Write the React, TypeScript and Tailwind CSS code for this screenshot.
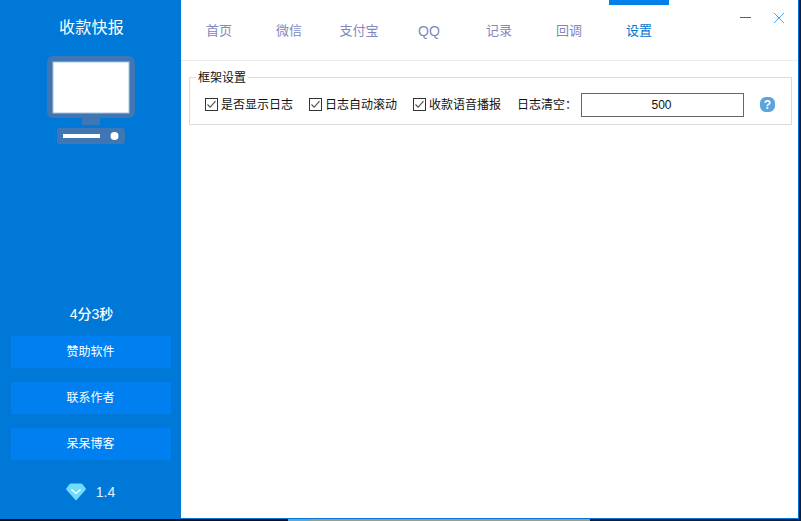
const FONT = "font-['Liberation_Sans','Noto_Sans_CJK_SC',sans-serif]";

const tabs = ["首页", "微信", "支付宝", "QQ", "记录", "回调", "设置"];

function Monitor() {
  return (
    <svg width="88" height="88" viewBox="0 0 88 88" className="block">
      <rect x="0" y="0" width="88" height="62" rx="6" fill="#3f76b4" />
      <rect x="6" y="6" width="76" height="51" fill="#fff" stroke="#a9c1de" strokeWidth="1" />
      <rect x="35" y="62" width="18" height="7" fill="#3f76b4" />
      <rect x="10" y="72" width="68" height="16" rx="3" fill="#3f76b4" />
      <rect x="16" y="78" width="37" height="4" fill="#fff" />
      <circle cx="67.5" cy="80" r="4" fill="#fff" />
    </svg>
  );
}

function Diamond() {
  return (
    <svg width="20" height="18" viewBox="0 0 20 18" className="block">
      <path d="M5 0.5H15Q16 0.5 16.6 1.3L19.6 5.3Q20.2 6.2 19.4 7L10.6 17Q10 17.6 9.4 17L0.6 7Q-0.2 6.2 0.4 5.3L3.4 1.3Q4 0.5 5 0.5Z" fill="#6fdcfb" />
      <path d="M5.5 6.5L10 10.5L14.5 6.5" fill="none" stroke="#fff" strokeWidth="1.2" />
    </svg>
  );
}

function Check({ label }: { label: string }) {
  return (
    <div className="flex items-center gap-[3px]">
      <svg width="13" height="13" viewBox="0 0 13 13" className="block">
        <rect x="0.5" y="0.5" width="12" height="12" fill="#fff" stroke="#333" />
        <path d="M2.5 6.5L5.2 9.2L10.5 3.2" fill="none" stroke="#555" strokeWidth="1.2" />
      </svg>
      <span className="text-xs text-[#111]">{label}</span>
    </div>
  );
}

function SideButton({ label }: { label: string }) {
  return (
    <div className="h-8 w-40 flex items-center justify-center bg-[#0080f0] text-xs text-white">{label}</div>
  );
}

export default function App() {
  return (
    <div className={`w-[801px] h-[521px] overflow-hidden flex flex-col bg-[#0a1a3a] ${FONT}`}>
      <div className="h-[519px] flex">
        <div className="w-[799px] flex border-r border-b border-[#0078d7] bg-white">
          <aside className="w-[181px] shrink-0 bg-[#0078d7] flex flex-col items-center">
            <div className="mt-[18px] pl-[2px] text-base leading-[20px] tracking-[0.3px] text-white">收款快报</div>
            <div className="mt-[18px]">
              <Monitor />
            </div>
            <div className="mt-[160px] pl-[2px] text-sm leading-[20px] font-medium text-white">4分3秒</div>
            <div className="mt-3 flex flex-col gap-[14px]">
              <SideButton label="赞助软件" />
              <SideButton label="联系作者" />
              <SideButton label="呆呆博客" />
            </div>
            <div className="mt-[23px] flex items-center gap-[10px]">
              <Diamond />
              <span className="text-sm leading-[14px] text-[#e8f2ff]">1.4</span>
            </div>
          </aside>
          <main className="flex-1 flex flex-col min-w-0">
            <nav className="h-[61px] shrink-0 pl-[3px] flex border-b border-[#ececec]">
              {tabs.map((t) => (
                <div key={t} className="w-[70px] flex flex-col items-center">
                  <div className={`w-[60px] h-[5px] ${t === "设置" ? "bg-[#0080e8]" : ""}`} />
                  <div
                    className={`mt-4 leading-5 ${t === "QQ" ? "text-sm" : "text-[13px]"} ${t === "设置" ? "text-[#0072d0]" : "text-[#8088bf]"}`}
                  >
                    {t}
                  </div>
                </div>
              ))}
              <div className="ml-auto pr-[14px] pt-[13px] flex items-start gap-[22px]">
                <svg width="12" height="10" viewBox="0 0 12 10" className="block">
                  <path d="M0 4.5H11" stroke="#0078d7" strokeWidth="1" />
                </svg>
                <svg width="10" height="10" viewBox="0 0 10 10" className="block">
                  <path d="M0 0L10 10M10 0L0 10" stroke="#4ca6ee" strokeWidth="1" />
                </svg>
              </div>
            </nav>
            <div className="pl-2 pr-[6px] pt-2">
              <fieldset className="h-14 border border-[#dcdcdc] flex">
                <legend className="ml-[6px] px-[2px] pt-[2px] text-xs leading-[14px] text-[#111]">框架设置</legend>
                <div className="flex items-center w-full h-[39px] pl-[15px]">
                  <div className="w-[104px]"><Check label="是否显示日志" /></div>
                  <div className="w-[104px]"><Check label="日志自动滚动" /></div>
                  <div className="w-[104px]"><Check label="收款语音播报" /></div>
                  <span className="text-xs text-[#111]">日志清空：</span>
                  <div className="ml-1 w-[163px] h-6 pr-[2px] border border-[#666] flex items-center justify-center text-xs text-[#111]">500</div>
                  <div className="ml-4 w-[15px] h-[15px] rounded-[6px] bg-[#5ba3dc] flex items-center justify-center text-[12px] font-bold text-white">?</div>
                </div>
              </fieldset>
            </div>
          </main>
        </div>
      </div>
      <div className="h-[2px] flex">
        <div className="w-[288px] bg-[#0a1020]" />
        <div className="w-[22px] bg-[#5fa8d8]" />
        <div className="w-[280px] bg-[#a89a80]" />
        <div className="flex-1 bg-[#0a1a3a]" />
      </div>
    </div>
  );
}
